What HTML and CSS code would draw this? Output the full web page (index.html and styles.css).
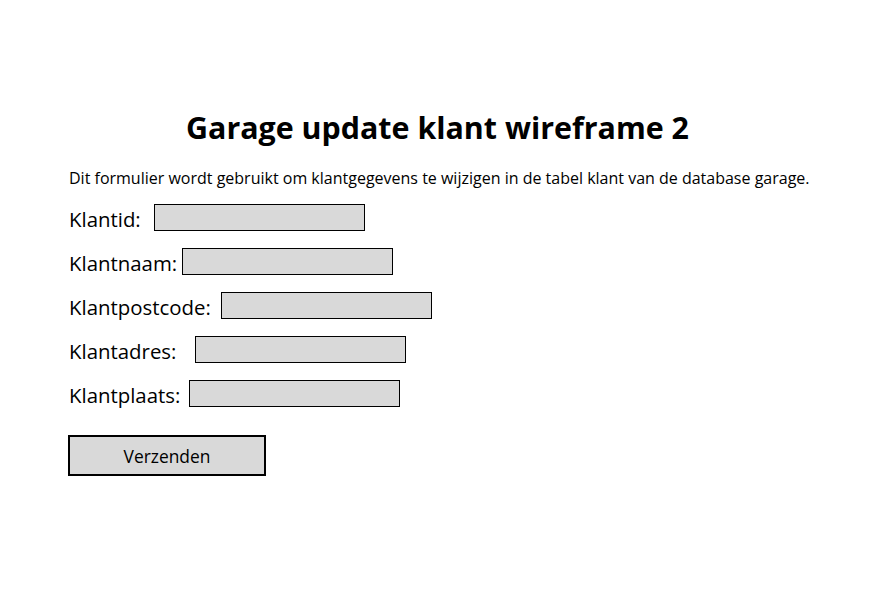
FILE: index.html
```html
<!DOCTYPE html>
<html lang="nl">
<head>
<meta charset="utf-8">
<title>Garage update klant wireframe 2</title>
<link rel="stylesheet" href="styles.css">
</head>
<body>
<main class="page">
  <h1 class="title">Garage update klant wireframe 2</h1>
  <p class="intro">Dit formulier wordt gebruikt om klantgegevens te wijzigen in de tabel klant van de database garage.</p>
  <form class="form">
    <div class="row row-id"><label class="label">Klantid:</label><span class="field"></span></div>
    <div class="row row-naam"><label class="label">Klantnaam:</label><span class="field"></span></div>
    <div class="row row-postcode"><label class="label">Klantpostcode:</label><span class="field"></span></div>
    <div class="row row-adres"><label class="label">Klantadres:</label><span class="field"></span></div>
    <div class="row row-plaats"><label class="label">Klantplaats:</label><span class="field"></span></div>
    <div class="actions"><span class="button">Verzenden</span></div>
  </form>
</main>
</body>
</html>
```

FILE: styles.css
```css
html, body {
  margin: 0;
  padding: 0;
  background: #ffffff;
}
body {
  font-family: "Open Sans", "Noto Sans", sans-serif;
  color: #000000;
  width: 892px;
  height: 592px;
}
.page {
  padding: 106px 86px 0 69px;
}
.title {
  margin: 0;
  font-size: 30.4px;
  font-weight: 700;
  line-height: 44px;
  text-align: center;
}
.intro {
  margin: 17px 0 0 0;
  font-size: 16px;
  line-height: 22px;
  white-space: nowrap;
}
.form {
  margin-top: 15px;
  display: flex;
  flex-direction: column;
  gap: 16px;
}
.row {
  display: flex;
  align-items: flex-start;
  height: 28px;
}
.label {
  font-size: 20.4px;
  line-height: 25px;
  padding-top: 3px;
}
.field {
  display: block;
  width: 209px;
  height: 25px;
  background: #d9d9d9;
  border: 1px solid #000000;
}
.row-id .label { width: 85px; }
.row-naam .label { width: 113px; }
.row-postcode .label { width: 152px; }
.row-adres .label { width: 126px; }
.row-plaats .label { width: 120px; }
.actions {
  margin-top: 11px;
  display: flex;
}
.button {
  display: flex;
  align-items: center;
  justify-content: center;
  width: 194px;
  height: 37px;
  margin-left: -1px;
  background: #d9d9d9;
  border: 2px solid #000000;
  font-size: 17.4px;
}
```
